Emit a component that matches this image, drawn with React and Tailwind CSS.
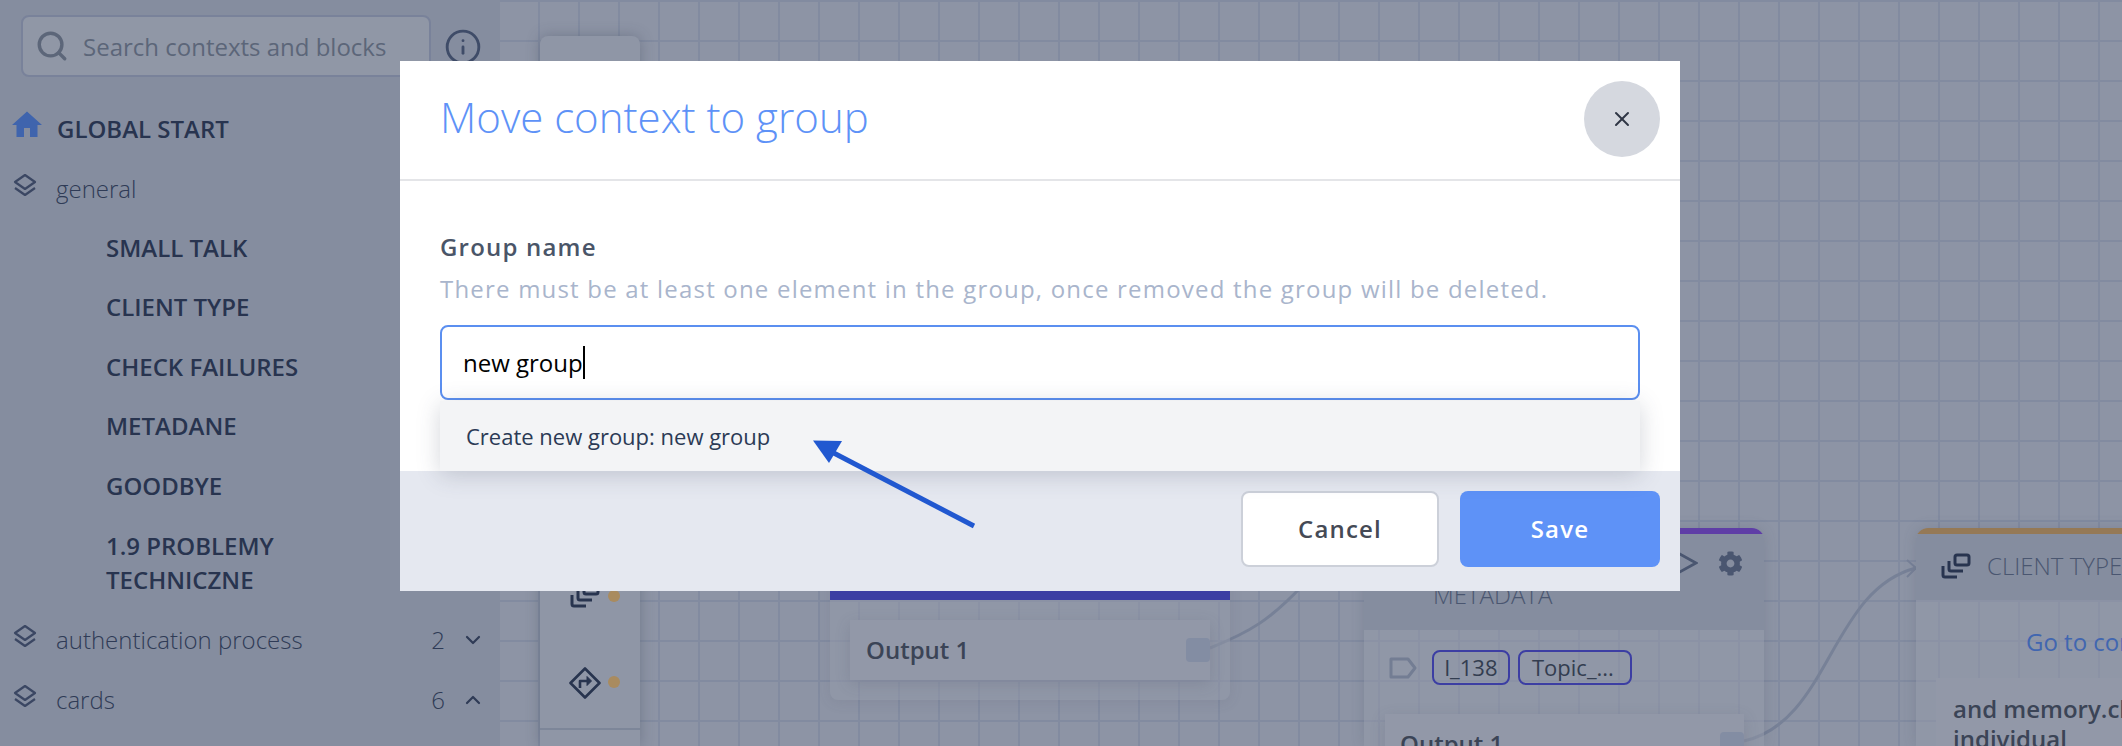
import { ChevronDown, ChevronUp, Info, Search, X } from 'lucide-react';
import { FaCog } from 'react-icons/fa';
import { MdHome } from 'react-icons/md';

const contexts = ['SMALL TALK', 'CLIENT TYPE', 'CHECK FAILURES', 'METADANE', 'GOODBYE'];

function LayersIcon({ className }) {
  return (
    <svg viewBox="0 0 24 24" className={className} fill="none" stroke="currentColor" strokeWidth="2.2" strokeLinejoin="round">
      <path d="M12 2 L22 9 L12 16 L2 9 Z" />
      <path d="M2 15 L12 22 L22 15" />
    </svg>
  );
}

function StackIcon({ className }) {
  return (
    <svg viewBox="0 0 30 26" className={className} fill="none" stroke="currentColor" strokeWidth="3" strokeLinejoin="round">
      <rect x="14" y="2" width="14" height="10" rx="2" />
      <path d="M8 8 V16 a2 2 0 0 0 2 2 H22" />
      <path d="M2 13 V22 a2 2 0 0 0 2 2 H16" />
    </svg>
  );
}

function GroupRow({ label, count, open }) {
  return (
    <div className="flex h-[60px] items-center pl-[13px] pr-[15px]">
      <LayersIcon className="mb-[8px] h-[26px] w-[24px] text-[#3b4763]" />
      <span className="mb-[1px] ml-[19px] flex-1 text-[24px] font-light text-[#2f3b56]">{label}</span>
      {count && <span className="text-[24px] font-light text-[#2f3b56]">{count}</span>}
      {count && (open ? (
        <ChevronUp size={24} strokeWidth={2.2} className="ml-[16px] text-[#2f3b56]" />
      ) : (
        <ChevronDown size={24} strokeWidth={2.2} className="ml-[16px] text-[#2f3b56]" />
      ))}
    </div>
  );
}

function Sidebar() {
  return (
    <div className="flex h-full w-[500px] shrink-0 flex-col bg-[#858d9f]">
      <div className="flex items-center pl-[21px] pt-[15px]">
        <div className="flex h-[62px] w-[410px] items-center rounded-lg border-2 border-[#79829a] bg-[#9097a6] pl-[12px]">
          <Search size={34} strokeWidth={2.4} className="text-[#5c6679]" />
          <span className="ml-[14px] mt-[2px] text-[24px] text-[#5c6679]">Search contexts and blocks</span>
        </div>
        <Info size={38} strokeWidth={1.8} className="ml-[13px] mt-[1px] text-[#3f4c68]" />
      </div>
      <div className="mt-[22px] flex h-[60px] items-center pl-[13px]">
        <MdHome className="mb-[8px] h-[36px] w-[36px] -translate-x-[4px] text-[#3f64ad]" />
        <span className="ml-[8px] text-[24px] font-semibold text-[#28344f]">GLOBAL START</span>
      </div>
      <GroupRow label="general" />
      {contexts.map((item) => (
        <div key={item} className="flex h-[59.5px] items-center pb-[2px] pl-[106px] text-[24px] font-semibold text-[#28344f]">
          {item}
        </div>
      ))}
      <div className="h-[93.5px] pl-[106px] pt-[12px] text-[24px] font-semibold leading-[34px] text-[#28344f]">
        1.9 PROBLEMY
        <br />
        TECHNICZNE
      </div>
      <GroupRow label="authentication process" count="2" />
      <GroupRow label="cards" count="6" open />
    </div>
  );
}

function OutputRow({ className, handleClassName }) {
  return (
    <div className={`absolute flex items-center bg-[#9298a8] shadow-[0_4px_14px_rgba(70,78,100,0.18)] ${className}`}>
      <span className="text-[24px] font-semibold text-[#3b4456]">Output 1</span>
      <span className={`absolute h-[24px] w-[24px] rounded-[4px] bg-[#838da3] ${handleClassName}`} />
    </div>
  );
}

function Canvas() {
  return (
    <div className="relative h-full flex-1 bg-[#8d94a5] bg-[linear-gradient(to_right,#828ba0_2px,transparent_2px),linear-gradient(to_bottom,#828ba0_2px,transparent_2px)] bg-[length:40px_40px] bg-[position:-2px_0]">
      <svg className="absolute left-0 top-0 h-full w-full" fill="none" stroke="#778197" strokeWidth="3">
        <path d="M710 648 C750 632 770 620 803 585" />
        <path d="M1244 741 C1330 722 1330 590 1416 568" />
        <path d="M1407 560 L1416 568 L1407 577" strokeWidth="2" />
      </svg>

      {/* toolbar */}
      <div className="absolute left-[40px] top-[36px] h-[710px] w-[100px] rounded-t-lg bg-[#8f96a6] shadow-[0_0_14px_rgba(60,68,90,0.35)]">
        <StackIcon className="absolute left-[30px] top-[545px] h-[28px] w-[30px] text-[#28344f]" />
        <span className="absolute left-[68px] top-[554px] h-[12px] w-[12px] rounded-full bg-[#a98b5f]" />
        <svg viewBox="0 0 32 32" className="absolute left-[29px] top-[631px] h-[32px] w-[32px] text-[#28344f]" fill="none" stroke="currentColor" strokeWidth="2.6" strokeLinejoin="round">
          <path d="M16 1.5 L30.5 16 L16 30.5 L1.5 16 Z" />
          <path d="M11 21 V14 H20" />
          <path d="M18 9.5 L22.5 14 L18 18.5 Z" fill="currentColor" strokeWidth="1" />
        </svg>
        <span className="absolute left-[68px] top-[640px] h-[12px] w-[12px] rounded-full bg-[#a98b5f]" />
        <div className="absolute left-0 top-[692px] h-[2px] w-full bg-[#7d8699]" />
      </div>

      {/* first block */}
      <div className="absolute left-[330px] top-[530px] h-[170px] w-[400px] rounded-lg bg-[#939aa9]/50 shadow-[0_2px_14px_rgba(70,78,100,0.12)]">
        <div className="absolute left-0 top-[60px] h-[10px] w-full bg-[#3c3ea3]" />
      </div>
      <OutputRow className="left-[350px] top-[620px] h-[60px] w-[360px] pl-[16px]" handleClassName="right-0 top-[18px]" />

      {/* metadata block */}
      <div className="absolute left-[864px] top-[528px] h-[218px] w-[400px] overflow-hidden rounded-t-xl bg-[#939aa9]/50 shadow-[0_0_14px_rgba(70,78,100,0.2)]">
        <div className="h-[6px] bg-[#5f3ea6]" />
        <div className="relative h-[96px] bg-[#858d9f]">
          <FaCog className="absolute left-[354px] top-[17px] h-[25px] w-[25px] text-[#4a5670]" />
          <svg viewBox="0 0 24 24" className="absolute left-[310px] top-[17px] h-[24px] w-[24px] text-[#4a5670]" fill="none" stroke="currentColor" strokeWidth="2.6">
            <path d="M4 2 L22 12 L4 22 Z" />
          </svg>
          <span className="absolute left-[69px] top-[43px] text-[24px] font-light text-[#4a5670]">METADATA</span>
        </div>
        <div className="flex items-center pl-[25px] pt-[20px]">
          <svg viewBox="0 0 28 22" className="h-[22px] w-[28px] text-[#737d93]" fill="none" stroke="currentColor" strokeWidth="3" strokeLinejoin="round">
            <path d="M2 2 H19 L26 11 L19 20 H2 Z" />
          </svg>
          <span className="ml-[15px] flex h-[35px] w-[78px] items-center justify-center rounded-lg border-2 border-[#3c3ea3] text-[22px] text-[#333d50]">l_138</span>
          <span className="ml-[8px] flex h-[35px] w-[114px] items-center rounded-lg border-2 border-[#3c3ea3] pl-[12px] text-[22px] text-[#333d50]">Topic_...</span>
        </div>
      </div>
      <OutputRow className="left-[885px] top-[714px] h-[60px] w-[359px] pl-[15px]" handleClassName="right-0 top-[18px]" />

      {/* client type block */}
      <div className="absolute left-[1416px] top-[528px] h-[218px] w-[400px] overflow-hidden rounded-t-xl bg-[#939aa9]/50 shadow-[0_0_14px_rgba(70,78,100,0.2)]">
        <div className="h-[6px] bg-[#957956]" />
        <div className="flex h-[66px] items-center bg-[#858d9f] pb-[2px] pl-[25px]">
          <StackIcon className="h-[26px] w-[30px] text-[#28344f]" />
          <span className="ml-[16px] whitespace-nowrap text-[24px] font-light text-[#4a5670]">CLIENT TYPE</span>
        </div>
        <div className="pl-[110px] pt-[24px] text-[24px] text-[#4166b0]">Go to context</div>
        <div className="absolute left-[20px] top-[150px] h-[100px] w-[360px] bg-[#9298a8] pl-[17px] pt-[16px] text-[24px] font-semibold leading-[30px] text-[#3b4456]">
          and memory.client
          <br />
          individual
        </div>
      </div>
    </div>
  );
}

function Modal() {
  return (
    <div className="absolute left-[400px] top-[61px] flex h-[530px] w-[1280px] flex-col bg-white">
      <div className="flex h-[120px] shrink-0 items-center justify-between border-b-2 border-[#e4e5e8] pb-[2px] pl-[40px] pr-[20px]">
        <h2 className="mb-[5px] text-[42px] font-light text-[#5e92f7]">Move context to group</h2>
        <button type="button" className="flex h-[76px] w-[76px] items-center justify-center rounded-full bg-[#d5d8df] text-[#2f3645]">
          <X size={24} strokeWidth={2} />
        </button>
      </div>
      <div className="relative flex-1 pl-[40px] pr-[40px] pt-[51px]">
        <div className="text-[24px] font-semibold leading-[30px] tracking-[1.2px] text-[#4a5568]">Group name</div>
        <div className="mt-[10px] text-[24px] leading-[34px] tracking-[1.2px] text-[#a9b5cc]">
          There must be at least one element in the group, once removed the group will be deleted.
        </div>
        <div className="mt-[19px] flex h-[75px] items-center rounded-lg border-2 border-[#5b8ff0] pl-[21px] text-[24px] text-black">
          new group
          <span className="h-[33px] w-[2px] bg-black" />
        </div>
        <div className="absolute left-[40px] right-[40px] top-[220px] z-10 flex h-[70px] items-center bg-[#f3f4f6] pl-[26px] text-[22px] text-[#2b3a55] shadow-[0_4px_22px_rgba(60,68,90,0.22)]">
          Create new group: new group
        </div>
      </div>
      <div className="flex h-[120px] shrink-0 justify-end gap-[21px] bg-[#e5e8f0] pr-[20px] pt-[20px]">
        <button type="button" className="h-[76px] w-[198px] rounded-lg border-2 border-[#ccd0d9] bg-white text-[24px] font-semibold tracking-[1.2px] text-[#454a55]">
          Cancel
        </button>
        <button type="button" className="h-[76px] w-[200px] rounded-lg bg-[#5e92f7] text-[24px] font-semibold tracking-[1.2px] text-white">
          Save
        </button>
      </div>
    </div>
  );
}

export default function App() {
  return (
    <div className="relative flex h-[746px] w-[2122px] overflow-hidden font-['Open_Sans',sans-serif]">
      <Sidebar />
      <Canvas />
      <Modal />
      {/* annotation arrow */}
      <svg className="pointer-events-none absolute left-[800px] top-[430px] z-20 h-[110px] w-[190px]" viewBox="0 0 190 110">
        <path d="M174 96 L28 20" stroke="#2158d0" strokeWidth="5" />
        <path d="M13 10.5 L42 11 L29 33 Z" fill="#2158d0" />
      </svg>
    </div>
  );
}
